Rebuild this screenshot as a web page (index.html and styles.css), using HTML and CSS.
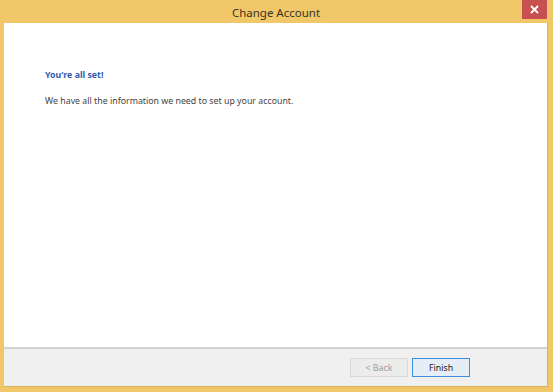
FILE: index.html
```html
<!DOCTYPE html>
<html lang="en">
<head>
    <meta charset="UTF-8">
    <title>Change Account</title>
    <link rel="stylesheet" href="styles.css">
</head>
<body>
    <div class="window">
        <div class="titlebar">
            <span class="title">Change Account</span>
            <button class="close" title="Close">
                <svg width="9" height="9" viewBox="0 0 9 9"><path d="M1 1L8 8M8 1L1 8" stroke="#fff" stroke-width="1.8"/></svg>
            </button>
        </div>

        <!-- main panel -->
        <div class="panel">
            <div class="content">
                <h2 class="heading">You're all set!</h2>
                <p class="message">We have all the information we need to set up your account.</p>
            </div>
            <div class="footer">
                <button class="btn" disabled>&lt; Back</button>
                <button class="btn primary">Finish</button>
            </div>
        </div>
    </div>
</body>
</html>
```

FILE: styles.css
```css
html, body {
    margin: 0;
    padding: 0;
}
body {
    font-family: "Noto Sans", "Open Sans", sans-serif;
    background-color: #f0c869;
    color: #333;
}
.window {
    width: 553px;
    height: 392px;
    display: flex;
    flex-direction: column;
    background-color: #f0c869;
    box-sizing: border-box;
    padding: 0 5px 5px 4px;
}
.titlebar {
    height: 23px;
    display: flex;
    align-items: center;
    justify-content: center;
    position: relative;
}
.title {
    font-size: 11.5px;
    color: #3b3324;
    margin-top: 1px;
}
.close {
    position: absolute;
    top: 0;
    right: 1px;
    width: 25px;
    height: 19px;
    border: none;
    padding: 0;
    background-color: #c75050;
    display: flex;
    align-items: center;
    justify-content: center;
}
.panel {
    flex: 1;
    display: flex;
    flex-direction: column;
    background-color: #fff;
    border-right: 1px solid #d8b45c;
    border-bottom: 1px solid #d8b45c;
}
.content {
    flex: 1;
    padding: 46px 0 0 41px;
}
.heading {
    margin: 0;
    font-size: 8.8px;
    font-weight: bold;
    color: #2f5cb0;
}
.message {
    margin: 14px 0 0;
    font-size: 8.8px;
    color: #444;
}
.footer {
    height: 37px;
    background-color: #f0f0f0;
    border-top: 2px solid #d3d3d3;
    display: flex;
    align-items: center;
    justify-content: flex-end;
    padding-right: 77px;
    gap: 4px;
}
.btn {
    width: 58px;
    height: 19px;
    padding: 0;
    font-family: inherit;
    font-size: 8.8px;
    color: #222;
    background-color: #e8e8e8;
    border: 1px solid #adadad;
}
.btn:disabled {
    color: #9c9c9c;
    background-color: #ececec;
    border-color: #d9d9d9;
}
.primary {
    border-color: #3c8fd8;
    background-color: #e5eef7;
}
```
